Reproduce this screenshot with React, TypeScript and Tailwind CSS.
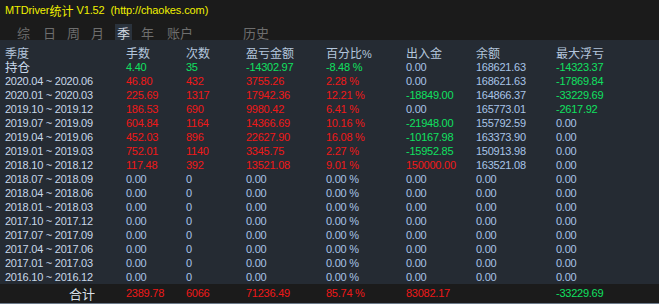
import React from "react";

const R = "text-[#f01818]";
const G = "text-[#10e060]";
const Z = "text-[#a8c4e8]";
const W = "text-[#c8d8ea]";

type Cell = [string, string];
type Row = { label: string; cells: Cell[]; big?: boolean };

const zeroRow = (label: string): Row => ({
  label,
  cells: [
    ["0.00", Z],
    ["0", Z],
    ["0.00", Z],
    ["0.00 %", Z],
    ["0.00", Z],
    ["0.00", Z],
    ["0.00", Z],
  ],
});

const rows: Row[] = [
  {
    label: "持仓",
    big: true,
    cells: [
      ["4.40", G],
      ["35", G],
      ["-14302.97", G],
      ["-8.48 %", G],
      ["0.00", Z],
      ["168621.63", Z],
      ["-14323.37", G],
    ],
  },
  {
    label: "2020.04 ~ 2020.06",
    cells: [
      ["46.80", R],
      ["432", R],
      ["3755.26", R],
      ["2.28 %", R],
      ["0.00", Z],
      ["168621.63", Z],
      ["-17869.84", G],
    ],
  },
  {
    label: "2020.01 ~ 2020.03",
    cells: [
      ["225.69", R],
      ["1317", R],
      ["17942.36", R],
      ["12.21 %", R],
      ["-18849.00", G],
      ["164866.37", Z],
      ["-33229.69", G],
    ],
  },
  {
    label: "2019.10 ~ 2019.12",
    cells: [
      ["186.53", R],
      ["690", R],
      ["9980.42", R],
      ["6.41 %", R],
      ["0.00", Z],
      ["165773.01", Z],
      ["-2617.92", G],
    ],
  },
  {
    label: "2019.07 ~ 2019.09",
    cells: [
      ["604.84", R],
      ["1164", R],
      ["14366.69", R],
      ["10.16 %", R],
      ["-21948.00", G],
      ["155792.59", Z],
      ["0.00", Z],
    ],
  },
  {
    label: "2019.04 ~ 2019.06",
    cells: [
      ["452.03", R],
      ["896", R],
      ["22627.90", R],
      ["16.08 %", R],
      ["-10167.98", G],
      ["163373.90", Z],
      ["0.00", Z],
    ],
  },
  {
    label: "2019.01 ~ 2019.03",
    cells: [
      ["752.01", R],
      ["1140", R],
      ["3345.75", R],
      ["2.27 %", R],
      ["-15952.85", G],
      ["150913.98", Z],
      ["0.00", Z],
    ],
  },
  {
    label: "2018.10 ~ 2018.12",
    cells: [
      ["117.48", R],
      ["392", R],
      ["13521.08", R],
      ["9.01 %", R],
      ["150000.00", R],
      ["163521.08", Z],
      ["0.00", Z],
    ],
  },
  zeroRow("2018.07 ~ 2018.09"),
  zeroRow("2018.04 ~ 2018.06"),
  zeroRow("2018.01 ~ 2018.03"),
  zeroRow("2017.10 ~ 2017.12"),
  zeroRow("2017.07 ~ 2017.09"),
  zeroRow("2017.04 ~ 2017.06"),
  zeroRow("2017.01 ~ 2017.03"),
  zeroRow("2016.10 ~ 2016.12"),
];

const cols = "grid grid-cols-[126px_60px_60px_80px_80px_70px_80px_1fr]";
const latin = "[font-family:'Liberation_Sans',Arial,sans-serif]";
const cjk = "[font-family:'Noto_Sans_CJK_SC','Liberation_Sans',sans-serif]";
const num = "text-[11px] tracking-[-0.25px]";

const tabs = [
  { t: "综", x: "w-[26px]" },
  { t: "日", x: "w-[24px]" },
  { t: "周", x: "w-[24px]" },
  { t: "月", x: "w-[26px]" },
  { t: "季", x: "w-[24px]", sel: true },
  { t: "年", x: "w-[26px]" },
  { t: "账户", x: "w-[76px]" },
  { t: "历史", x: "w-[40px]" },
];

export default function App() {
  return (
    <div className={`w-[659px] h-[304px] bg-[#1b1b1b] flex flex-col overflow-hidden ${latin}`}>
      <div className="h-[20px] pl-[5px] pt-[1px] flex items-center text-[11px] tracking-[-0.1px] text-[#f0f000] whitespace-pre leading-none">
        <span>MTDriver</span>
        <span className={`${cjk} text-[12px] tracking-normal`}>统计</span>
        <span> V1.52  (http://chaokes.com)</span>
      </div>
      <div className={`h-[20px] flex items-end pl-[15px] ${cjk} text-[13px] leading-none`}>
        {tabs.map((tb) => (
          <div key={tb.t} className={`${tb.x} flex`}>
            <div
              className={`h-[16px] px-[2px] flex items-center ${
                tb.sel ? "bg-[#2a323c] text-[#d0d8e0]" : "text-[#6e6e6e]"
              }`}
            >
              {tb.t}
            </div>
          </div>
        ))}
      </div>
      <div className="flex-1 bg-[#252b33] flex flex-col pt-[6px]">
        <div className={`${cols} h-[14px] items-center ${cjk} text-[12px] leading-[12px] text-[#b4c6dc]`}>
          <div className="pl-[5px]">季度</div>
          <div>手数</div>
          <div>次数</div>
          <div>盈亏金额</div>
          <div>
            百分比<span className={`${latin} text-[11px]`}>%</span>
          </div>
          <div>出入金</div>
          <div>余额</div>
          <div>最大浮亏</div>
        </div>
        {rows.map((r) => (
          <div key={r.label} className={`${cols} h-[14px] items-center ${num} leading-[12px]`}>
            <div className={`pl-[5px] ${W} ${r.big ? `${cjk} text-[12.5px] tracking-normal` : ""}`}>{r.label}</div>
            {r.cells.map((c, i) => (
              <div key={i} className={c[1]}>
                {c[0]}
              </div>
            ))}
            <div />
          </div>
        ))}
      </div>
      <div className={`${cols} h-[20px] items-center ${num} leading-none bg-[#1b1b1b] border-b border-[#6c7a8a]`}>
        <div className={`text-right pr-[31px] ${cjk} text-[13px] tracking-normal text-[#d8e0e8]`}>合计</div>
        <div className={R}>2389.78</div>
        <div className={R}>6066</div>
        <div className={R}>71236.49</div>
        <div className={R}>85.74 %</div>
        <div className={R}>83082.17</div>
        <div />
        <div className={G}>-33229.69</div>
      </div>
    </div>
  );
}
